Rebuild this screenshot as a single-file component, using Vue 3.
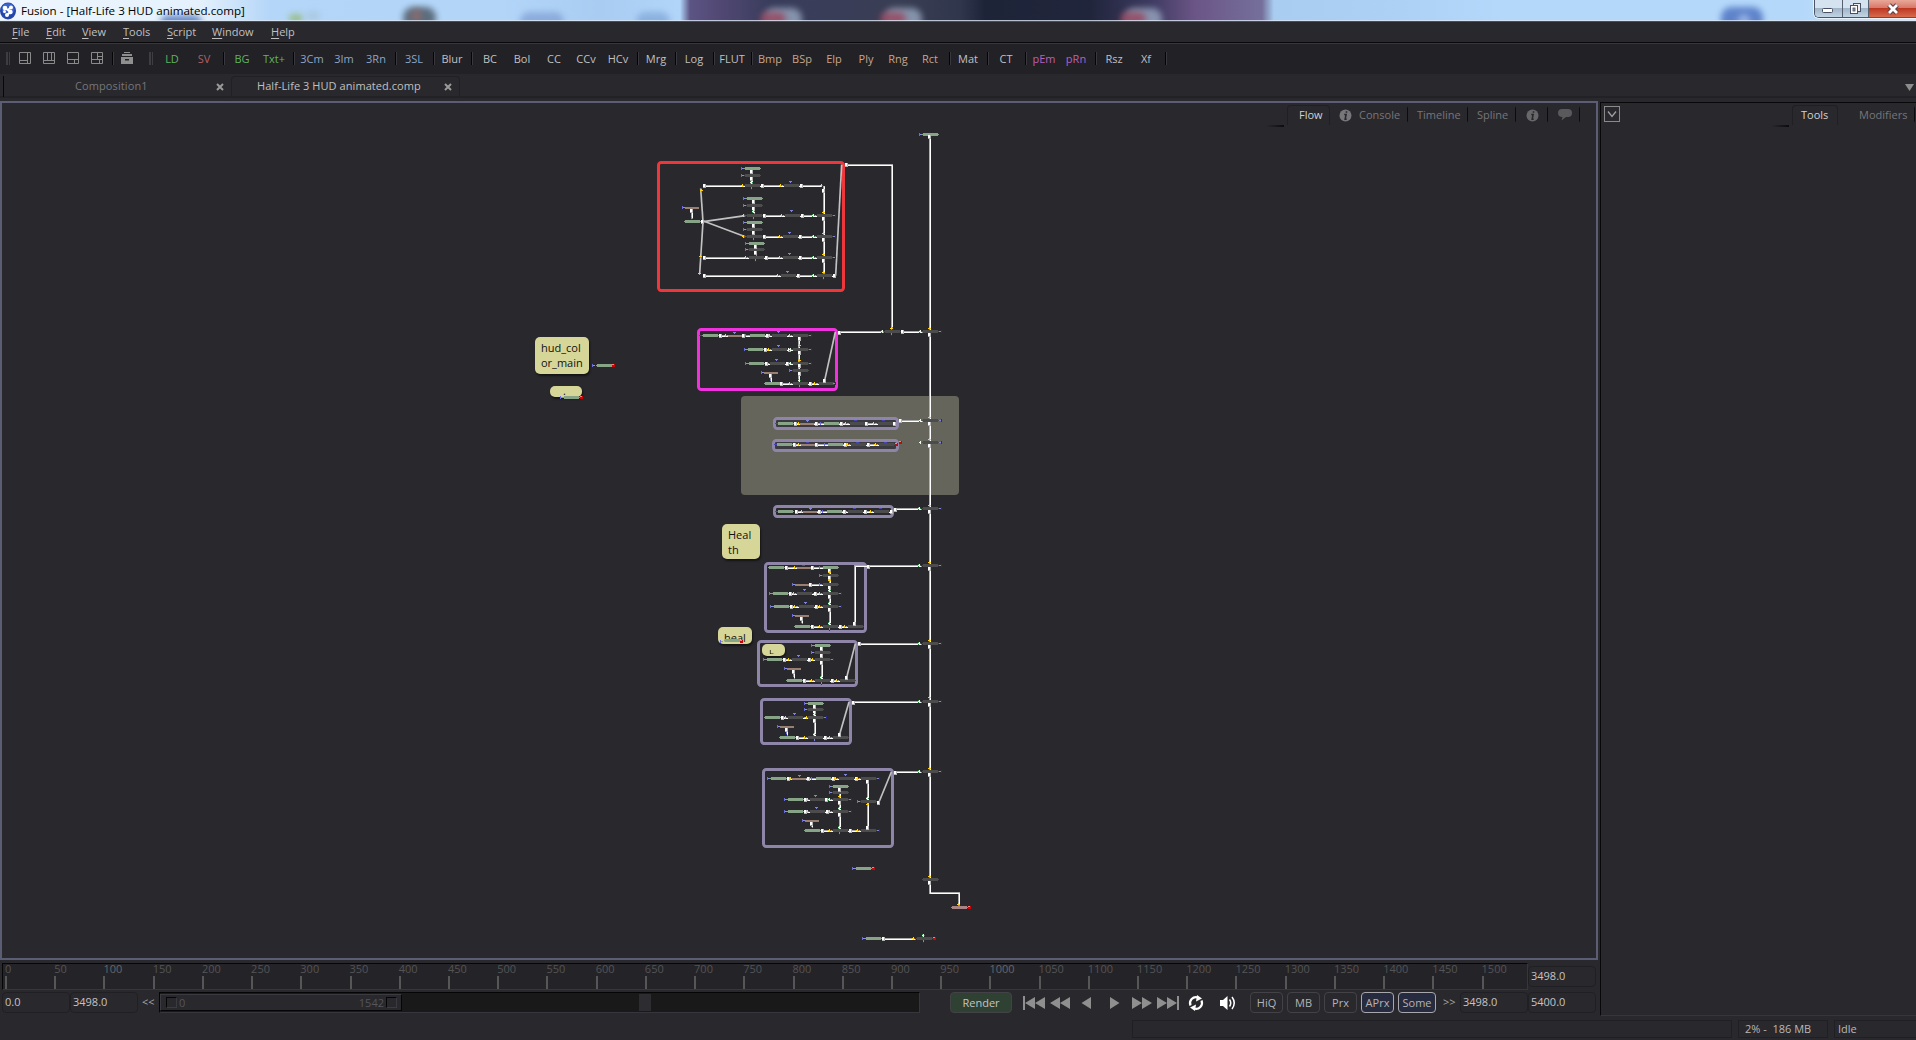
<script setup>
const menus = [['File', 34], ['Edit', 36], ['View', 41], ['Tools', 44], ['Script', 45], ['Window', 59], ['Help', 40]]

const tools = [
  ['LD', 'green'], ['SV', 'red'], null, ['BG', 'green'], ['Txt+', 'green'], null,
  ['3Cm', 'blue'], ['3Im', 'blue'], ['3Rn', 'blue'], null, ['3SL', 'blue'], null, ['Blur'], null,
  ['BC'], ['Bol'], ['CC'], ['CCv'], ['HCv'], null, ['Mrg'], null, ['Log'], null, ['FLUT'], null,
  ['Bmp', 'tan'], ['BSp', 'tan'], ['Elp', 'tan'], ['Ply', 'tan'], ['Rng', 'tan'], ['Rct', 'tan'], null,
  ['Mat'], null, ['CT'], null, ['pEm', 'pink'], ['pRn', 'pink'], null, ['Rsz'], ['Xf'], null,
]

const layoutIcons = [
  'M.5.5h11v11h-11zM8.500.5v11M.5 8.500h8',
  'M.5.5h11v11h-11zM4.500.5v8M8.500.5v8M.5 8.500h11',
  'M.5.5h11v11h-11zM.5 7.500h11M7.500 7.500v4',
  'M.5.5h11v11h-11zM.5 7.500h11M6.500.5v7M8.500 7.500v4M6.500 4.500h5',
]

const ticks = Array.from({ length: 31 }, (_, i) => i * 50)

const blobs = [
  [160, 15, 42, 16, '#3f68b4'], [289, 14, 14, 9, '#8fb560'], [306, 11, 14, 10, '#a8c4d8'], [403, 7, 33, 22, '#3c4650'],
  [412, 9, 9, 14, '#9a6a68'], [520, 12, 44, 18, '#7f9fd4'], [636, 12, 34, 18, '#7fa6d8'],
  [764, 8, 38, 22, '#a3b4cc'], [760, 12, 26, 14, '#9c3c54'], [884, 8, 38, 22, '#a3b4cc'], [880, 12, 26, 14, '#9c3c54'],
  [1124, 8, 38, 22, '#a3b4cc'], [1120, 12, 26, 14, '#9c3c54'], [1721, 7, 42, 34, '#3f63b8'], [1738, 14, 12, 14, '#a9c4f0'],
]

// "x y x y ..." strings become coordinate pairs, centred on whole screen pixels
const mid = (v) => Math.floor(v / 3) * 3 + 1.5
const pairs = (s) => {
  const n = s.trim().split(/\s+/).map(Number)
  const out = []
  for (let i = 0; i < n.length; i += 2) out.push([mid(n[i]), mid(n[i + 1])])
  return out
}
const snap = (s) => s.replace(/\d+/g, (v) => Math.round(v / 3) * 3)

// Every section is laid out at three units per screen pixel from its own origin.
const sections = [
  {
    x: 640, y: 120,
    frames: [[51, 123, 564, 393, '#ef363b']],
    wires: ['193,197 543,197', '551,197 551,460', '373,287 551,287', '373,350 551,350', '193,413 551,413', '193,467 583,467', '155,264 155,295', '335,146 335,190', '341,236 341,280', '341,308 341,345', '347,371 347,405', '619,134 756,134 756,621'],
    slants: ['189,305 182,205', '190,305 316,287', '190,303 316,350', '189,305 179,462', '587,467 605,134'],
    bars: {
      g: '338 146 344 236 344 308 350 371 158 305 872 44',
      d: '338 167 338 197 455 197 344 257 344 287 458 287 554 287 344 329 344 350 452 350 554 350 350 389 350 413 452 413 554 413 446 467 554 467',
      t: '156 264',
    },
    ports: {
      b: '307 146 307 167 313 236 313 257 313 308 313 329 319 371 319 389 129 263 840 44',
      w: '335 154 335 175 367 197 484 197 551 210 193 197 341 244 341 265 373 287 487 287 551 294 341 316 341 336 373 350 481 350 551 357 347 379 347 397 379 413 481 413 551 420 193 413 193 467 475 467 583 467 155 271 187 305 619 134 869 50',
      n: '335 186 341 274 521 287 521 350 521 413 521 467',
      y: '306 197 422 197 543 197 311 287 425 287 311 350 419 350 317 413 419 413 413 467',
      Y: '183 211 551 276 551 339 551 402 551 456 182 408 179 459',
      v: '452 186 455 275 449 339 449 402 443 456',
      s: '335 205 341 295 341 357 347 420 551 475 155 294',
      e: '584 287 584 350 584 413',
    },
  },
  {
    x: 520, y: 310,
    frames: [[531, 54, 423, 189, '#f031de'], [759, 321, 378, 39, '#8e85a8', '#3b3a3e'], [756, 387, 381, 39, '#8e85a8', '#3b3a3e']],
    wires: ['601,77 842,77', '740,119 842,119', '740,161 842,161', '838,77 838,221', '784,221 918,221', '958,66 1090,66', '1147,66 1205,66', '1141,332 1205,332', '826,341 1123,341', '823,404 1100,404', '752,189 752,215'],
    slants: ['914,211 946,66'],
    bars: {
      g: '572 77 712 77 707 119 710 161 756 221 252 167 155 263 796 341 935 341 794 404 947 404',
      d: '779 77 842 77 779 119 842 119 773 161 842 161 842 182 842 221 918 221 1118 65 1232 65 1232 332 1232 398 1013 341 1096 341 1016 404 1100 404',
      t: '647 78 753 189 863 342 866 405',
    },
    ports: {
      b: '680 77 676 119 679 161 810 182 726 188 903 341 915 404 219 167 123 263',
      w: '601 77 670 77 743 77 737 119 740 161 808 119 803 161 838 85 838 127 838 167 838 190 752 196 784 221 870 221 914 211 958 66 1147 65 1229 73 1229 340 1229 405 1141 332 826 341 889 341 964 341 1039 341 1123 341 823 404 889 404 976 404 1045 404',
      y: '617 77 748 77 808 77 746 119 809 221 884 221 836 341 976 341 1061 341 835 404 982 404 1067 404',
      Y: '838 107 838 150 1115 55 1229 55 1229 322 1229 388',
      n: '810 119 810 161 838 211 1087 65 1201 65 1201 332 1201 398',
      v: '644 69 776 67 776 108 770 150 863 333',
      s: '752 210 838 229 1115 73',
      q: '541 77 1007 332 1091 332 863 398 1013 398 1097 398 770 341 767 404',
      e: '870 77 870 119 870 161 943 221 1261 65 1261 332 1261 398',
      r: '281 167 183 263 1141 398 1129 404',
    },
  },
  {
    x: 700, y: 490,
    frames: [[219, 45, 363, 39, '#8e85a8'], [192, 216, 309, 213, '#8e85a8'], [171, 450, 303, 141, '#8e85a8']],
    wires: ['289,65 573,65', '586,57 662,57', '259,233 391,233', '465,400 465,228 505,228', '505,228 662,228', '389,233 389,405', '331,284 391,284', '271,311 391,311', '274,350 391,350', '305,378 305,400', '337,410 467,410', '365,467 365,568', '253,509 367,509', '281,537 281,565', '313,572 443,572', '478,461 662,461'],
    slants: ['440,562 466,461'],
    bars: {
      g: '257 65 404 65 228 233 391 233 241 311 244 350 307 410 367 467 223 509 283 572 97 452',
      d: '467 65 545 65 391 257 391 284 313 311 391 311 319 350 391 350 391 410 467 410 367 488 298 509 367 509 367 572 443 572 691 56 691 227 691 461',
      t: '332 66 312 234 306 285 306 378 282 537',
    },
    ports: {
      b: '371 65 361 233 361 257 361 284 280 284 210 311 213 350 279 377 337 467 337 488 192 509 255 536 64 453',
      w: '289 65 358 65 433 65 496 65 573 65 586 57 689 64 259 233 337 233 389 240 389 263 389 293 331 284 271 311 346 311 389 318 274 350 349 350 389 357 305 384 337 410 421 410 464 400 505 228 689 235 253 509 328 509 365 475 365 496 365 516 281 543 313 572 397 572 440 562 478 461 689 468',
      y: '304 65 511 65 284 233 281 311 358 311 284 350 358 350 358 410 434 410 265 509 336 509 335 572 410 572',
      Y: '389 248 389 272 689 45 689 216 689 451',
      n: '659 56 659 227 659 461 389 302 389 339 389 399 365 562',
      v: '332 57 313 300 317 339 296 498',
      q: '230 65 464 56 542 56 311 227',
      s: '305 396 389 418 281 560 365 580',
      e: '721 56 721 227 721 461 421 311 421 350 397 509',
      r: '124 453',
    },
  },
  {
    x: 700, y: 690,
    frames: [[180, 24, 276, 141, '#8e85a8'], [186, 234, 396, 240, '#8e85a8']],
    wires: ['248,83 346,83', '344,41 344,138', '260,111 260,135', '292,143 422,143', '460,36 662,36', '586,246 662,246', '266,266 505,266', '503,266 503,330', '503,340 503,415', '419,290 419,417', '316,329 421,329', '316,365 421,365', '335,393 335,412', '367,422 505,422', '550,746 645,746', '690,577 690,608 777,608 777,645'],
    slants: ['419,133 447,36', '537,336 574,246'],
    bars: {
      g: '346 41 217 83 262 143 235 266 370 266 421 290 286 329 286 365 337 422 491 536 520 746',
      d: '346 59 287 83 346 83 346 143 422 143 691 35 691 245 439 266 505 266 421 308 352 329 421 329 352 365 421 365 421 422 505 422 505 335 691 569 673 746',
      t: '261 111 299 267 336 393',
      p: '777 653',
    },
    ports: {
      b: '316 41 316 59 235 110 204 266 338 266 390 290 390 308 256 329 256 365 309 392 474 335 459 536 489 746',
      w: '344 48 344 68 344 91 248 83 260 118 292 143 376 143 419 133 460 36 689 43 586 246 689 253 266 266 325 266 401 266 470 266 503 273 419 298 316 329 380 329 419 337 316 365 383 365 419 373 335 399 367 422 451 422 503 412 535 336 689 577 550 746',
      y: '255 83 318 83 314 143 389 143 271 266 405 266 472 266 322 329 322 365 388 365 389 422 473 422 641 746',
      Y: '689 23 689 234 689 558 776 642 419 318 503 343',
      n: '659 35 659 245 389 329 344 132 344 74 419 354 419 411 503 324 671 735',
      v: '284 72 299 258 437 255 347 318 350 354',
      s: '260 131 344 151 335 410 419 430 671 754',
      e: '376 83 721 35 721 245 534 266 450 329 450 365 534 422',
      r: '519 536 808 653 702 746',
    },
  },
]

const notes = [
  [535, 337, 54, 37, 'hud_col\nor_main', 6, 3], [550, 386, 32, 11, '.', 13, 0, 'dot'], [722, 524, 38, 35, 'Heal\nth', 6, 3],
  [718, 627, 34, 17, 'heal', 6, 3], [762, 644, 23, 12, 'L', 7, 5, 'mini'],
]
</script>

<template>
  <div class="window">
    <header class="titlebar">
      <i v-for="(b, i) in blobs" :key="i" class="blob" :style="{ left: b[0] + 'px', top: b[1] + 'px', width: b[2] + 'px', height: b[3] + 'px', background: b[4] }"></i>
      <svg class="logo" width="16" height="18" viewBox="0 0 16 18">
        <ellipse cx="8" cy="9" rx="8" ry="8.500" fill="#2346a8" />
        <ellipse cx="8" cy="7" rx="6.500" ry="6" fill="#3a63cc" />
        <g fill="#fff"><circle cx="5" cy="6" r="2.300" /><circle cx="11" cy="5.500" r="2" /><circle cx="4.500" cy="9.500" r="1.500" /><circle cx="10.500" cy="10" r="2.200" /><circle cx="7" cy="13" r="2" /></g>
        <path d="M5 6l5.500 4-3.500 3M11 5.500l-4 3" stroke="#fff" stroke-width="2" fill="none" />
      </svg>
      <span class="title">Fusion - [Half-Life 3 HUD animated.comp]</span>
      <div class="winbtns">
        <span class="wb min"><svg width="14" height="8"><rect x="1.500" y="1.500" width="10" height="4" rx="1" fill="#fff" stroke="#4a5064" /></svg></span>
        <span class="wb max"><svg width="14" height="14"><rect x="4.500" y="1.500" width="7" height="8" fill="#eee" stroke="#4a5064" /><rect x="1.500" y="3.500" width="7" height="8" fill="#fff" stroke="#4a5064" /><rect x="4" y="6" width="2" height="3" fill="#8ea0b8" stroke="#4a5064" stroke-width=".8" /></svg></span>
        <span class="wb close"><svg width="14" height="12" viewBox="0 0 14 12"><path d="M3 2l8 8M11 2l-8 8" stroke="#59424c" stroke-width="5" /><path d="M3 2l8 8M11 2l-8 8" stroke="#fff" stroke-width="2.800" /></svg></span>
      </div>
    </header>

    <nav class="menubar">
      <span v-for="m in menus" :key="m[0]" :style="{ width: m[1] + 'px' }"><u>{{ m[0][0] }}</u>{{ m[0].slice(1) }}</span>
    </nav>

    <div class="toolbar">
      <i class="grip"></i>
      <div class="icons">
        <svg v-for="d in layoutIcons" :key="d" width="12" height="12"><path :d="d" fill="none" stroke="#8a8a8a" /></svg>
      </div>
      <i class="sep"></i>
      <svg class="archive" width="12" height="12" viewBox="0 0 12 12" fill="#8f8f8f"><path d="M3 0h6v1H3zM1 2h10v2H1zM0 5h12v7H0z" /><path d="M4 7h4v1.500H4z" fill="#222126" /></svg>
      <i class="grip second"></i>
      <template v-for="(t, i) in tools" :key="i">
        <span v-if="t" class="tool" :class="t[1]">{{ t[0] }}</span>
        <i v-else class="sep"></i>
      </template>
    </div>

    <div class="doctabs">
      <div class="doctab plain"><span>Composition1</span><svg width="8" height="8"><path d="M1 1l6 6M7 1L1 7" stroke="#9a9a9a" stroke-width="2" /></svg></div>
      <div class="doctab active"><span>Half-Life 3 HUD animated.comp</span><svg width="8" height="8"><path d="M1 1l6 6M7 1L1 7" stroke="#9a9a9a" stroke-width="2" /></svg></div>
      <svg class="more" width="10" height="8"><path d="M0 0h9L4.500 7z" fill="#8c8c8c" /></svg>
    </div>

    <main class="work">
      <section class="left">
        <div class="flow">
          <div class="paneltabs">
            <i class="shade"></i>
            <span class="ptab on flowtab">Flow</span>
            <span class="ptab console"><svg width="13" height="13" viewBox="0 0 13 13"><circle cx="6.500" cy="6.500" r="6" fill="#77777a" /><path d="M7.500 2.200v1.600M5.200 5.500h1.900l-.9 4.700h1.500" stroke="#29282d" stroke-width="1.600" fill="none" /></svg>Console</span>
            <span class="ptab timeline">Timeline</span>
            <span class="ptab spline">Spline</span>
            <span class="ptab ico"><svg width="13" height="13" viewBox="0 0 13 13"><circle cx="6.500" cy="6.500" r="6" fill="#68686b" /><path d="M7.500 2.200v1.600M5.200 5.500h1.900l-.9 4.700h1.500" stroke="#29282d" stroke-width="1.600" fill="none" /></svg></span>
            <span class="ptab ico"><svg width="14" height="12" viewBox="0 0 14 12"><path d="M4 0h6q4 0 4 4t-4 4H8L3.500 11.500 4.500 8Q0 8 0 4t4-4z" fill="#5a5a5c" /></svg></span>
          </div>
          <div class="canvas">
            <div class="backdrop"></div>
            <div v-for="(n, i) in notes" :key="i" class="note" :class="n[7]" :style="{ left: n[0] + 'px', top: n[1] + 'px', width: n[2] + 'px', height: n[3] + 'px', padding: n[6] + 'px 0 0 ' + n[5] + 'px' }"><span>{{ n[4] }}</span></div>
            <svg class="graph" width="1594" height="855" viewBox="2 103 1594 855">
              <defs>
                <path id="bar" d="M-22.500-4.500h45v3h3v3h-3v3h-45v-3h-3v-3h3z" />
                <path id="flat" d="M-22.500-4.500h42v6h-42z" />
                <g id="b"><path d="M-4.500-4.500h3v9h-3z" fill="#6a6edb" /><path d="M-1.500-1.500h6v3h-6z" fill="#8a8fe6" /></g>
                <g id="w"><path d="M-4.500-4.500h9v12h-9z" fill="#b5b5b5" /><path d="M-4.500-4.500h6v9h-6z" fill="#fff" /></g>
                <g id="n"><path d="M-4.500-4.500h3v9h-3z" fill="#2f8040" /><path d="M-4.500-1.500h6v3h-6zM-1.500-4.500h3v9h-3z" fill="#e6ffe6" /><path d="M1.500-1.500h3v3h-3z" fill="#2f8040" /></g>
                <g id="y"><path d="M-1.500-4.500h3v9h-3zM-4.500-1.500h6v3h-6z" fill="#ffda10" /><path d="M1.500-1.500h3v3h-3z" fill="#a85b00" /></g>
                <g id="Y"><path d="M-4.500-1.500h9v3h-9zM-1.500-4.500h3v3h-3z" fill="#ffcf10" /><path d="M-1.500 1.500h3v3h-3z" fill="#e58a00" /></g>
                <g id="v"><path d="M-4.500-4.500h9v3h-9z" fill="#8085dc" /><path d="M-1.500-1.500h3v3h-3z" fill="#8085dc" /></g>
                <g id="s"><path d="M-1.500-4.500h3v6h-3z" fill="#8085dc" /><path d="M-1.500 1.500h3v3h-3z" fill="#2528a8" /></g>
                <path id="q" d="M-4.500-1.500h9v3h-9z" fill="#4448b0" />
                <g id="e"><path d="M-4.500-1.500h6v3h-6z" fill="#8085dc" /><path d="M1.500-4.500h3v9h-3z" fill="#25288c" /></g>
                <g id="r"><path d="M-4.500-4.500h9v9h-9z" fill="#c40808" /><path d="M-4.500-4.500h6v3h-6z" fill="#ff8080" /></g>
              </defs>
              <path d="M929.500 137V893" stroke="#b0b0b0" stroke-width="1" /><path d="M930.500 137V893" stroke="#fff" stroke-width="1" />
              <g v-for="s in sections" :key="s.x + s.y" :transform="`translate(${s.x} ${s.y}) scale(.33333333)`">
                <rect v-for="(f, i) in s.frames" :key="'f' + i" :x="f[0] + 4.500" :y="f[1] + 4.500" :width="f[2] - 9" :height="f[3] - 9" rx="8" :fill="f[5] || 'none'" :stroke="f[4]" stroke-width="9" />
                <g v-for="(w, i) in s.wires" :key="'w' + i" fill="none">
                  <polyline :points="snap(w)" stroke="#a8a8a8" stroke-width="6" />
                  <polyline :points="snap(w)" stroke="#fff" stroke-width="3" transform="translate(1.500 1.500)" />
                </g>
                <polyline v-for="(w, i) in s.slants" :key="'l' + i" :points="w" fill="none" stroke="#c2c2c2" stroke-width="5" />
                <g v-for="(list, kind) in s.bars" :key="'b' + kind" :class="'bar-' + kind">
                  <use v-for="(p, i) in pairs(list)" :key="i" :href="kind === 't' ? '#flat' : '#bar'" :transform="`translate(${p[0]} ${p[1]})`" />
                </g>
                <g v-for="(list, kind) in s.ports" :key="'p' + kind">
                  <use v-for="(p, i) in pairs(list)" :key="i" :href="'#' + kind" :transform="`translate(${p[0]} ${p[1]})`" />
                </g>
              </g>
            </svg>
          </div>
        </div>

        <div class="timerow">
          <div class="ruler">
            <div v-for="t in ticks" :key="t" class="tick" :class="{ hot: t === 100 || t === 1000 }"><span>{{ t }}</span></div>
          </div>
          <span class="field now">3498.0</span>
        </div>

        <div class="controls">
          <span class="field a">0.0</span><span class="field a">3498.0</span><span class="arrows l">&lt;&lt;</span>
          <div class="track">
            <div class="thumb"><i></i><span>0</span><span class="end">1542</span><i></i></div>
            <div class="playhead"></div>
          </div>
          <button class="render">Render</button>
          <svg class="transport" width="218" height="18" viewBox="1020 0 218 18">
            <g fill="#8f8f8f">
              <path d="M1023 2h2v14h-2zM1035 3v12l-10-6zM1045 3v12l-10-6zM1060 3v12l-10-6zM1070 3v12l-10-6zM1091 3v12l-9.500-6zM1110 3v12l9.500-6zM1132 3v12l10-6zM1142 3v12l10-6zM1157 3v12l10-6zM1167 3v12l10-6zM1177 2h2v14h-2z" />
            </g>
            <g fill="none" stroke="#fff" stroke-width="2.200"><path d="M1190.500 11.500a6 6 0 0 1 7.500-8M1201.500 6.500a6 6 0 0 1-7.500 8" /></g>
            <path d="M1197 1l5 3.500-6 3zM1195 17l-5-3.500 6-3zM1220 6h3l4.500-4v14l-4.500-4h-3z" fill="#fff" />
            <path d="M1229.500 5.500q2.500 3.500 0 7M1232 3q4.500 6 0 12" fill="none" stroke="#fff" stroke-width="1.500" />
          </svg>
          <button class="opt">HiQ</button><button class="opt">MB</button><button class="opt">Prx</button><button class="opt on">APrx</button><button class="opt on wide">Some</button>
          <span class="arrows r">&gt;&gt;</span>
          <span class="field c">3498.0</span><span class="field c">5400.0</span>
        </div>
      </section>

      <aside class="side">
        <div class="paneltabs">
          <svg class="check" width="16" height="16"><rect x=".5" y=".5" width="15" height="15" fill="none" stroke="#8a8a8c" /><path d="M4 5.500l4 5 4-5" fill="none" stroke="#a0a0a2" stroke-width="1.300" /></svg>
          <i class="shade"></i>
          <span class="ptab on toolstab">Tools</span>
          <span class="ptab mods">Modifiers</span>
        </div>
      </aside>
    </main>

    <footer class="status">
      <span class="cell progress"></span><span class="cell memory">2% -&nbsp; 186 MB</span><span class="cell state">Idle</span>
    </footer>
  </div>
</template>

<style>
body { background: #29282d; overflow: hidden; }
</style>

<style scoped>
* { box-sizing: border-box; }
.window { width: 1916px; height: 1040px; display: flex; flex-direction: column; background: #29282d; color: #c0c0c0; font: 11px/15px "Open Sans", "Noto Sans", sans-serif; overflow: hidden; white-space: pre; }
.titlebar { height: 22px; flex: none; position: relative; display: flex; overflow: hidden; border-bottom: 1px solid #4a4c5c;
  background: linear-gradient(90deg, #eef6fd 0, #e4f1fc 200px, #b4d6f8 270px, #b2d5f8 500px, #a9cdf2 600px, #b1d5f9 680px, #5c5484 690px, #514873 720px, #393d5c 770px, #393e54 900px, #30364c 960px, #1e2438 985px, #20253b 1090px, #3d3a60 1150px, #6b5587 1195px, #75709b 1262px, #a9cdf0 1274px, #acd1f5 1400px, #b4d8fa 1500px, #b4d8fa 1800px, #d3e7fa 1916px); }
.titlebar::after { content: ""; position: absolute; left: 0; right: 0; top: 20px; height: 1px; background: #dce6f2cc; }
.blob { position: absolute; border-radius: 10px; filter: blur(3px); opacity: .72; }
.logo { position: relative; margin-top: 2px; }
.title { position: relative; margin: 3px 0 0 5px; color: #000; font-size: 11.600px; line-height: 16px; }
.winbtns { position: relative; margin-left: auto; width: 102px; height: 18px; display: flex; border: 1px solid #4c5566; border-top: 0; border-right: 0; border-radius: 0 0 0 5px; overflow: hidden; box-shadow: 0 0 0 1px #e8f2fb; }
.wb { display: flex; align-items: center; justify-content: center; height: 17px; border-right: 1px solid #56606f; background: linear-gradient(#d5e2ef 0 45%, #a1b5c9 50%, #c2d5e6); }
.wb.min { width: 28px; padding-top: 4px; }
.wb.max { width: 27px; }
.wb.close { width: 47px; border: 0; background: linear-gradient(#e8a899 0, #d9796a 45%, #bd3823 50%, #d86a4c); }
.menubar { height: 21px; flex: none; display: flex; padding: 2px 0 0 12px; border-bottom: 1px solid #0a0a0c; box-shadow: 0 1px 0 #37363c; position: relative; }
.menubar span { flex: none; }
u { text-underline-offset: 2px; }
.toolbar { height: 31px; flex: none; background: #222126; display: flex; align-items: center; padding: 0 0 1px 6px; }
.grip { width: 4px; height: 13px; border: solid #3e3e42; border-width: 0 1px 0 2px; flex: none; }
.grip.second { margin: 0 3px 0 16px; }
.icons { display: flex; gap: 12px; margin: 0 6px 0 9px; }
.archive { margin-left: 6px; }
.sep { width: 6px; height: 13px; flex: none; background: linear-gradient(90deg, transparent 3px, #050506 3px 4px, #39383e 4px 5px, transparent 5px); }
.tool { width: 32px; flex: none; text-align: center; }
.green { color: #5fb45f; } .red { color: #b35f5f; } .blue { color: #8ba6cb; } .tan { color: #c7a68a; } .pink { color: #bb5fbb; }
.doctabs { height: 27px; flex: none; display: flex; padding: 2px 0 0 3px; background: linear-gradient(#29282d 22px, #222126 22px 24px, #29282d 24px); position: relative; }
.doctab { display: flex; height: 21px; padding-top: 2px; }
.doctab svg { margin: 5px 0 0 auto; }
.doctab.plain { width: 228px; padding-left: 72px; padding-right: 7px; color: #76767a; box-shadow: inset 1px 0 #08080a; letter-spacing: .1px; }
.doctab.active { width: 229px; padding-left: 25px; padding-right: 7px; border: 1px solid #212025; border-bottom: 0; border-radius: 4px 4px 0 0; padding-top: 1px; letter-spacing: .06px; }
.more { margin: 8px 1px 0 auto; }
.work { flex: none; height: 915px; display: flex; }
.left { width: 1600px; flex: none; }
.flow { width: 1598px; height: 859px; border: 2px solid #5b5d74; position: relative; }
.paneltabs { position: absolute; z-index: 1; top: 2px; right: 0; height: 20px; display: flex; }
.ptab { height: 20px; padding-top: 2px; display: flex; color: #76767a; border-right: 1px solid #0c0c0e; border-image: linear-gradient(transparent 2px, #0c0c0e 4px, #0c0c0e 15px, transparent 17px) 1; }
.flow .paneltabs { right: 16px; }
.ptab.on { color: #d2d2d2; border: 1px solid #201f24; border-bottom: 0; border-image: none; border-radius: 4px 4px 0 0; padding-top: 1px; }
.flowtab { width: 43px; padding-left: 11px; }
.console { width: 78px; padding-left: 9px; }
.console svg { margin: 2px 7px 0 0; }
.timeline { width: 60px; padding-left: 9px; }
.spline { width: 48px; padding-left: 9px; }
.ico { width: 32px; padding-left: 10px; }
.ico svg { margin-top: 2px; }
.shade { width: 18px; height: 2px; margin: 20px 3px 0 0; background: linear-gradient(90deg, transparent, #0c0c0e); }
.canvas { position: absolute; inset: 0; }
.graph { position: absolute; left: 0; top: 0; }
.backdrop { position: absolute; left: 739px; top: 293px; width: 218px; height: 99px; border-radius: 4px; background: #65655b; }
.note { position: absolute; transform: translate(-2px, -103px); border-radius: 5px; background: #d7d699; color: #111; overflow: hidden; box-shadow: 1px 2px 2px #151518; }
.note.dot { line-height: 9px; overflow: visible; }
.note.mini { font-size: 5px; line-height: 6px; }
.note.mini span { display: inline-block; transform: scaleX(1.8); transform-origin: 0 0; }
.bar-g { fill: #87a586; } .bar-d { fill: #4c4c4c; } .bar-t { fill: #987f72; } .bar-p { fill: #a88386; }
.timerow { display: flex; height: 32px; padding: 3px 0 0 2px; }
.ruler { width: 1526px; height: 27px; border: solid; border-width: 1px; border-color: #060607 #37363c #37363c #060607; background: #242327; display: flex; padding-left: 2px; overflow: hidden; }
.tick { width: 49.220px; flex: none; color: #545456; background: linear-gradient(#565656, #565656) 0 12px / 2px 13px no-repeat; line-height: 10px; }
.hot { color: #66666a; }
.field { border: 1px solid #201f23; border-radius: 4px; height: 21px; line-height: 18px; padding-left: 2px; flex: none; color: #c4c4c4; }
.now { width: 68px; margin-top: 3px; }
.controls { display: flex; padding-left: 2px; height: 21px; }
.field.a, .field.c { width: 68px; }
.arrows { line-height: 20px; color: #a8a8a8; flex: none; }
.arrows.l { width: 21px; padding-left: 4px; }
.arrows.r { width: 24px; padding-left: 7px; }
.track { width: 761px; height: 21px; flex: none; background: #19191a; border: solid; border-width: 1px; border-color: #050506 #37363c #37363c #050506; display: flex; padding-top: 1px; }
.thumb { width: 242px; height: 17px; background: #29282d; border: solid; border-width: 1px; border-color: #3b3a40 #050506 #050506 #3b3a40; display: flex; align-items: center; padding: 0 4px 0 5px; color: #55555a; gap: 2px; line-height: 14px; }
.thumb i { width: 11px; height: 11px; border: solid 1px; border-color: #050506 #3b3a40 #3b3a40 #050506; }
.end { margin-left: auto; }
.playhead { width: 12px; height: 17px; background: #2d2c31; margin-left: 237px; }
button { font: inherit; padding: 0; color: #b4b4b4; flex: none; line-height: 19px; border-radius: 4px; height: 21px; border: 1px solid #434247; background: #29282d; }
.render { width: 62px; margin-left: 30px; background: #2f4133; color: #c4c4c4; }
.transport { flex: none; margin: 2px 12px 0 8px; }
.opt { width: 33px; margin-right: 4px; }
.opt.on { border-color: #a8a8ac; background: #262b3f; }
.opt.wide { width: 38px; margin-right: 0; }
.side { flex: 1; height: 914px; margin-top: 1px; border: solid; border-width: 1px 0 1px 1px; border-color: #08080a #08080a #37363c #08080a; position: relative; }
.side .paneltabs { left: 3px; top: 2px; right: 0; }
.check { margin: 1px 0 0; }
.side .shade { margin-left: 151px; }
.toolstab { width: 46px; padding-left: 8px; }
.mods { width: 77px; padding-left: 21px; }
.status { flex: 1; display: flex; gap: 6px; padding: 4px 0 0 1132px; }
.cell { height: 18px; border: 1px solid #201f23; line-height: 15px; color: #b8b8b8; flex: none; }
.progress { width: 600px; } .memory { width: 90px; padding-left: 6px; } .state { width: 90px; padding-left: 3px; }
</style>
